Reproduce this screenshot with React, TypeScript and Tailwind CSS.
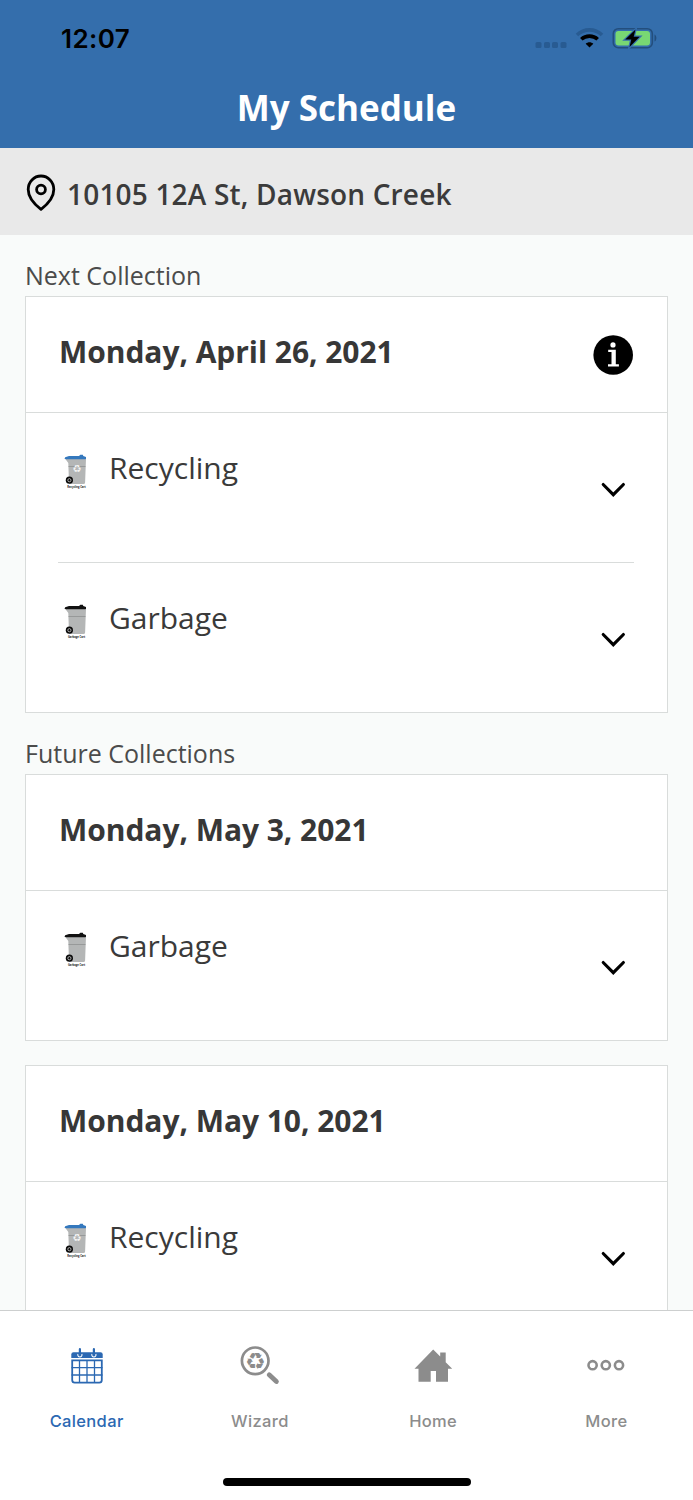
type Kind = 'Recycling' | 'Garbage'

const StatusBar = () => {
	return (
		<div className="flex h-[76px] items-center justify-between pl-[61px] pr-[36px]">
			<span className="mt-[1px] font-['Inter'] text-[26px] font-semibold leading-none tracking-[0.4px] text-black">12:07</span>
			<svg className="h-[26px] w-[122px]" viewBox="0 0 122 26" fill="none">
				<g fill="#285b92">
					<rect x="0.5" y="17" width="6" height="6" rx="1.6" />
					<rect x="9" y="17" width="6" height="6" rx="1.6" />
					<rect x="17" y="17" width="6" height="6" rx="1.6" />
					<rect x="25.5" y="17" width="6" height="6" rx="1.6" />
				</g>
				<path d="M42 10C49 3.2 60 3.2 67 10" stroke="#285b92" strokeWidth="3.6" />
				<path d="M46.3 14.3C50.8 10 58.2 10 62.7 14.3" stroke="#000" strokeWidth="3.6" />
				<path d="M50.7 18.7C53 16.7 56 16.7 58.3 18.7L54.5 22.5Z" fill="#000" />
				<rect x="78.3" y="3.7" width="39" height="19" rx="5" stroke="#234e7d" strokeWidth="1.6" />
				<rect x="80.5" y="6" width="34.5" height="14.5" rx="3" fill="#78d873" />
				<path d="M119.5 9.5C122 10.5 122 15.5 119.5 16.5Z" fill="#234e7d" />
				<path
					d="M100.5 4.5L90.2 14.5H96.3L94.5 22L104.7 11.7H98.7Z"
					fill="#000"
					stroke="#346eac"
					strokeWidth="2.4"
					paintOrder="stroke"
				/>
			</svg>
		</div>
	)
}

const PinIcon = () => {
	return (
		<svg className="mt-[2px] h-[38px] w-[30px] shrink-0" viewBox="0 0 30 38" fill="none" stroke="#000" strokeWidth="2.8">
			<path d="M15 35.3C11 32.2 2.2 25 2.2 15.4A12.8 13.4 0 0 1 27.8 15.4C27.8 25 19 32.2 15 35.3Z" strokeLinejoin="round" />
			<circle cx="15" cy="15.5" r="4.4" />
		</svg>
	)
}

const InfoIcon = () => {
	return (
		<svg className="mt-[1px] size-[40px]" viewBox="0 0 40 40">
			<circle cx="20.2" cy="20" r="19.8" fill="#000" />
			<circle cx="20" cy="9.9" r="2.6" fill="#fff" />
			<path d="M15.2 14.8H22.8V29.2H25.9V31.5H15V29.2H18.5V17.1H15.2Z" fill="#fff" />
		</svg>
	)
}

const CartIcon = ({ kind }: { kind: Kind }) => {
	const lid = kind === 'Recycling' ? '#3478bd' : '#111'
	return (
		<svg className="mt-[41px] h-[36px] w-[26px] shrink-0" viewBox="0 0 26 36">
			<path d="M1 4.5L4.3 9L5 29.5Q5.2 30 7 30H19.5Q21 30 21.1 28.5L22 4.5Z" fill="#b4b6b6" />
			<path d="M4.5 12.5H21.5" stroke="#8f9292" strokeWidth="0.8" />
			<path d="M0.5 4.8L1.2 3.2L5 2H15L16.3 0.8H18.8L19.3 2L22 3V5L21 5.2H2Z" fill={lid} />
			{kind === 'Recycling' && (
				<text x="13" y="17.8" textAnchor="middle" fontFamily="DejaVu Sans" fontSize="10" fill="#f4f4f4">
					♻
				</text>
			)}
			<circle cx="5.4" cy="26.2" r="3.6" fill="#0a0a0a" />
			<circle cx="5.4" cy="26.2" r="1.6" fill="none" stroke="#d0d0d0" strokeWidth="0.8" />
			<text x="12.5" y="34" textAnchor="middle" fontFamily="Open Sans" fontWeight="700" fontSize="2.6" fill="#222">
				{kind} Cart
			</text>
		</svg>
	)
}

const Chevron = () => {
	return (
		<svg className="ml-auto mt-[69px] mr-[8px] h-[16px] w-[26px]" viewBox="0 0 26 16" fill="none">
			<path d="M3.2 2.5L13.3 12.7L23.4 2.5" stroke="#000" strokeWidth="3.1" strokeLinecap="round" />
		</svg>
	)
}

const CollectionCard = ({ date, items, info }: { date: string; items: Kind[]; info?: boolean }) => {
	return (
		<section className="ml-[25px] w-[643px] border border-[#d9dcdb] bg-white">
			<div className="flex h-[115px] items-center justify-between pl-[33px] pr-[34px]">
				<h2 className="-mt-[6px] whitespace-nowrap text-[30px] font-bold leading-[40px] tracking-[-0.05px] text-[#373737]">{date}</h2>
				{info && <InfoIcon />}
			</div>
			<div className="border-t border-[#d9dcdb] pl-[32px] pr-[33px]">
				{items.map((kind, i) => (
					<div key={kind} className={i > 0 ? 'flex h-[150px] border-t border-[#d9dcdb]' : 'flex h-[149px]'}>
						<div className="w-[51px] shrink-0 pl-[6px]">
							<CartIcon kind={kind} />
						</div>
						<span className="mt-[35px] text-[30px] leading-[40px] text-[#3a3a3a]">{kind}</span>
						<Chevron />
					</div>
				))}
			</div>
		</section>
	)
}

const CalendarIcon = () => {
	return (
		<svg className="h-[40px] w-[40px]" viewBox="0 0 40 40" fill="none" stroke="#2b68b2">
			<path d="M4.3 12V8.5Q4.3 6.3 6.5 6.3H33.5Q35.7 6.3 35.7 8.5V12Z" fill="#2b68b2" stroke="none" />
			<path d="M5.2 14.4H34.8V34Q34.8 36.7 32.3 36.7H7.7Q5.2 36.7 5.2 34Z" strokeWidth="1.8" />
			<path d="M4.5 21.7H35.500M4.5 29H35.500M12.5 14V37M20 14V37M27.5 14V37" strokeWidth="1.3" />
			<path d="M11 8A2.1 2.1 0 1 0 14.8 8M25 8A2.1 2.1 0 1 0 28.8 8" stroke="#fff" strokeWidth="1.1" />
			<path d="M12.9 3.2V8.8M26.9 3.2V8.8" strokeWidth="2.2" strokeLinecap="round" />
		</svg>
	)
}

const WizardIcon = () => {
	return (
		<svg className="h-[40px] w-[40px]" viewBox="0 0 40 40" fill="none">
			<circle cx="15.2" cy="14.8" r="13.3" stroke="#8c8c8c" strokeWidth="2.7" />
			<text x="15.2" y="22.7" textAnchor="middle" fontFamily="DejaVu Sans" fontSize="23" fill="#8c8c8c">
				♻
			</text>
			<path d="M29.2 28.8L36.4 35.5" stroke="#8c8c8c" strokeWidth="4.8" strokeLinecap="round" />
		</svg>
	)
}

const HomeIcon = () => {
	return (
		<svg className="h-[40px] w-[40px]" viewBox="0 0 40 40" fill="#8c8c8c">
			<path d="M20.2 3.5L1.5 22.7H5.5V35.7H17.7V25H23V35.7H35V22.7H39.2L32.7 16.2V6.5H27.2V10.5Z" />
		</svg>
	)
}

const MoreIcon = () => {
	return (
		<svg className="h-[40px] w-[40px]" viewBox="0 0 40 40" fill="none" stroke="#8c8c8c" strokeWidth="2.6">
			<circle cx="6.6" cy="19.2" r="4.1" />
			<circle cx="19.8" cy="19.2" r="4.1" />
			<circle cx="33" cy="19.2" r="4.1" />
		</svg>
	)
}

const tabs = [
	{ label: 'Calendar', Icon: CalendarIcon },
	{ label: 'Wizard', Icon: WizardIcon },
	{ label: 'Home', Icon: HomeIcon },
	{ label: 'More', Icon: MoreIcon },
]

const TabBar = () => {
	return (
		<nav className="h-[190px] shrink-0 border-t border-[#cdcfcf] bg-white">
			<div className="grid h-[167px] grid-cols-4 pt-[35px]">
				{tabs.map(({ label, Icon }, i) => (
					<div key={label} className="flex flex-col items-center">
						<Icon />
						<span
							className={
								i === 0
									? "mt-[25px] font-['Inter'] text-[16.5px] font-[450] leading-[20px] tracking-[0.35px] text-[#2b68b2]"
									: "mt-[25px] font-['Inter'] text-[16.5px] font-[450] leading-[20px] tracking-[0.35px] text-[#8c8c8c]"
							}
						>
							{label}
						</span>
					</div>
				))}
			</div>
			<div className="mx-auto h-[8px] w-[248px] rounded-full bg-black" />
		</nav>
	)
}

const App = () => {
	return (
		<div className="flex h-[1500px] w-[693px] flex-col overflow-hidden bg-[#f9fbfa] font-['Open_Sans',sans-serif]">
			<header className="h-[148px] shrink-0 bg-[#346eac]">
				<StatusBar />
				<h1 className="text-center text-[35px] font-bold leading-[64px] text-white">My Schedule</h1>
			</header>
			<div className="flex h-[87px] shrink-0 items-center gap-[11px] bg-[#e9e9e9] pl-[26px]">
				<PinIcon />
				<span className="mt-[5px] whitespace-nowrap text-[28px] font-semibold leading-[38px] tracking-[0.18px] text-[#3b3b3b]">
					10105 12A St, Dawson Creek
				</span>
			</div>
			<main className="min-h-0 flex-1 overflow-hidden">
				<h3 className="h-[61px] pl-[25px] pt-[23px] text-[25px] leading-[35px] text-[#4b4b4b]">Next Collection</h3>
				<CollectionCard date="Monday, April 26, 2021" items={['Recycling', 'Garbage']} info />
				<h3 className="h-[61px] pl-[25px] pt-[23px] text-[25px] leading-[35px] text-[#4b4b4b]">Future Collections</h3>
				<CollectionCard date="Monday, May 3, 2021" items={['Garbage']} />
				<div className="h-[24.4px]" />
				<CollectionCard date="Monday, May 10, 2021" items={['Recycling']} />
			</main>
			<TabBar />
		</div>
	)
}

export default App
